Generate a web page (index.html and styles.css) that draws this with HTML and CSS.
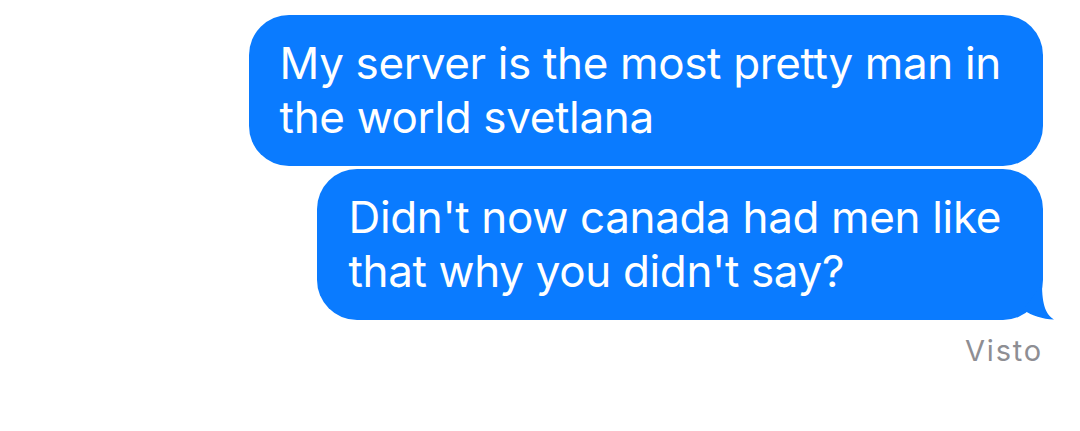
FILE: index.html
```html
<!DOCTYPE html>
<html lang="es">
<head>
    <meta charset="UTF-8">
    <meta name="viewport" content="width=device-width, initial-scale=1.0">
    <title>Mensajes</title>
    <link rel="stylesheet" href="styles.css">
</head>
<body>
    <div class="thread">
        <div class="bubble">My server is the most pretty man in<br>the world svetlana</div>
        <div class="bubble last">
            Didn't now canada had men like<br>that why you didn't say?
            <svg class="tail" width="40" height="40" viewBox="0 0 40 40">
                <path d="M27 4 C27 25 31 35 39 39.5 C27 39 18 36 8 30 Z" fill="#0a7bff"/>
            </svg>
        </div>
        <div class="status">Visto</div>
    </div>
</body>
</html>
```

FILE: styles.css
```css
body {
    margin: 0;
    padding: 0;
    background: #ffffff;
    font-family: Inter, "Noto Sans", sans-serif;
}
.thread {
    display: flex;
    flex-direction: column;
    align-items: flex-end;
    gap: 3px;
    padding: 15px 37px 0 0;
}
.bubble {
    position: relative;
    background: #0a7bff;
    color: #ffffff;
    font-size: 44px;
    letter-spacing: -0.35px;
    line-height: 54px;
    padding: 21px 42px 22px 31px;
    border-radius: 40px;
}
.tail {
    position: absolute;
    right: -12px;
    bottom: 0;
}
.status {
    margin-top: 11px;
    color: #8e8e93;
    font-size: 29px;
    letter-spacing: 1.8px;
    line-height: 34px;
}
```
